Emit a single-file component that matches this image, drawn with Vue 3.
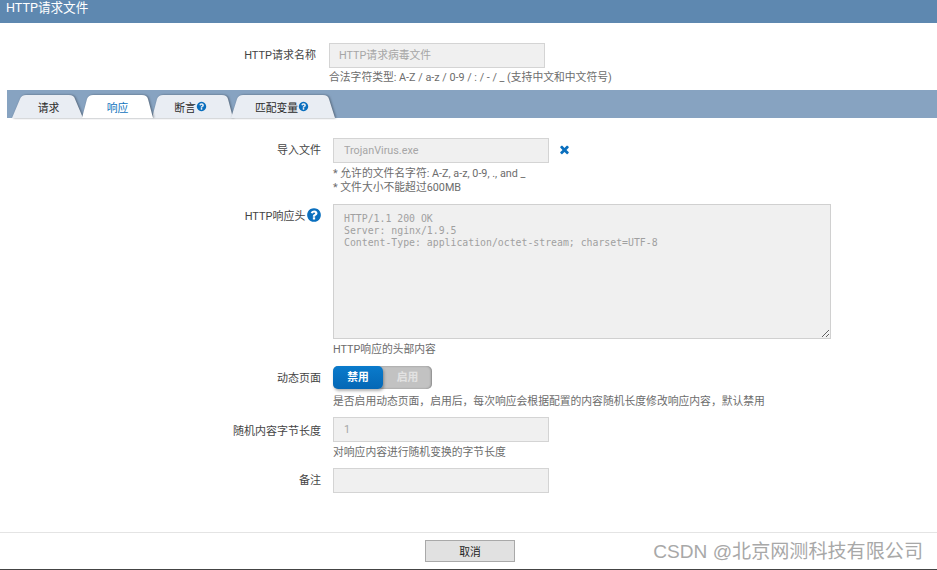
<script setup>
const tabs = [
  { label: '请求', width: 71, inset: 8, shift: 2, help: false },
  { label: '响应', width: 71, inset: 5, shift: 0, help: false, active: true },
  { label: '断言', width: 81, inset: 5, shift: -4, help: true },
  { label: '匹配变量', width: 104, inset: 6, shift: -2, help: true },
]
const tabPath = (t) => {
  const w = t.width
  const i = t.inset
  return `M0 23 L${i} 4 Q${i + 1.5} 0 ${i + 6} 0 L${w - i - 6} 0 Q${w - i - 1} 0 ${w - i} 4 L${w} 23 Z`
}
const tabStyle = (t) => ({
  width: t.width + 'px',
  paddingLeft: Math.max(t.shift, 0) + 'px',
  paddingRight: Math.max(-t.shift, 0) + 'px',
})
const headerText = 'HTTP/1.1 200 OK\nServer: nginx/1.9.5\nContent-Type: application/octet-stream; charset=UTF-8'
const helpPath = 'M1024 1376v-192q0-14-9-23t-23-9h-192q-14 0-23 9t-9 23v192q0 14 9 23t23 9h192q14 0 23-9t9-23zm256-672q0-88-55.5-163t-138.5-116-170-41q-243 0-371 213-15 24 8 42l132 100q7 6 19 6 16 0 25-12 53-68 86-92 34-24 86-24 48 0 85.5 26t37.5 59q0 38-20 61t-68 45q-63 28-115.5 86.5t-52.5 125.5v36q0 14 9 23t23 9h192q14 0 23-9t9-23q0-19 21.5-49.5t54.5-49.5q32-18 49-28.5t46-35 44.5-48 28-60.5 12.5-81zm384 192q0 209-103 385.5t-279.5 279.5-385.5 103-385.5-103-279.5-279.5-103-385.5 103-385.5 279.5-279.5 385.5-103 385.5 103 279.5 279.5 103 385.5z'
</script>

<template>
  <div class="page">
    <header class="title">HTTP请求文件</header>

    <section class="name-row">
      <label class="name-label">HTTP请求名称</label>
      <div class="control">
        <input class="field name-field" readonly value="HTTP请求病毒文件" />
        <div class="hint">合法字符类型: A-Z / a-z / 0-9 / : / - / _ (支持中文和中文符号)</div>
      </div>
    </section>

    <nav class="tabbar">
      <div v-for="t in tabs" :key="t.label" class="tab" :class="{ active: t.active }" :style="tabStyle(t)">
        <svg class="tab-bg" :width="t.width" height="23" :viewBox="`0 0 ${t.width} 23`">
          <path :d="tabPath(t)" />
        </svg>
        <span class="tab-label">{{ t.label }}</span>
        <svg v-if="t.help" class="help tab-help" viewBox="0 0 1792 1792"><path :d="helpPath" /></svg>
      </div>
    </nav>

    <main class="form">
      <div class="row">
        <label class="label">导入文件</label>
        <div class="control">
          <div class="file-line">
            <input class="field" readonly value="TrojanVirus.exe" />
            <svg class="remove" viewBox="0 0 1792 1792"><path d="M1490 1322q0 40-28 68l-136 136q-28 28-68 28t-68-28l-294-294-294 294q-28 28-68 28t-68-28l-136-136q-28-28-28-68t28-68l294-294-294-294q-28-28-28-68t28-68l136-136q28-28 68-28t68 28l294 294 294-294q28-28 68-28t68 28l136 136q28 28 28 68t-28 68l-294 294 294 294q28 28 28 68z" /></svg>
          </div>
          <div class="hint">* 允许的文件名字符: A-Z, a-z, 0-9, ., and _</div>
          <div class="hint tight">* 文件大小不能超过600MB</div>
        </div>
      </div>

      <div class="row">
        <label class="label">HTTP响应头<svg class="help label-help" viewBox="0 0 1792 1792"><path :d="helpPath" /></svg></label>
        <div class="control">
          <textarea class="area" readonly :value="headerText"></textarea>
          <div class="hint">HTTP响应的头部内容</div>
        </div>
      </div>

      <div class="row">
        <label class="label">动态页面</label>
        <div class="control">
          <div class="toggle">
            <span class="opt on">禁用</span>
            <span class="opt off">启用</span>
          </div>
          <div class="hint toggle-hint">是否启用动态页面，启用后，每次响应会根据配置的内容随机长度修改响应内容，默认禁用</div>
        </div>
      </div>

      <div class="row random-row">
        <label class="label">随机内容字节长度</label>
        <div class="control">
          <input class="field" readonly value="1" />
          <div class="hint">对响应内容进行随机变换的字节长度</div>
        </div>
      </div>

      <div class="row">
        <label class="label">备注</label>
        <div class="control">
          <input class="field" readonly value="" />
        </div>
      </div>
    </main>

    <footer class="footer">
      <button class="cancel" type="button">取消</button>
      <div class="watermark">CSDN @北京网测科技有限公司</div>
    </footer>
  </div>
</template>

<style>
html, body { margin: 0; background: #fff; overflow: hidden; }
</style>

<style scoped>
.page {
  position: relative;
  height: 570px;
  display: flex;
  flex-direction: column;
  box-sizing: border-box;
  font-family: Roboto, "Noto Sans CJK SC", sans-serif;
  font-size: 10.8px;
  color: #444;
  background: #fff;
}
.title {
  height: 23px;
  line-height: 16px;
  padding-left: 6px;
  background: #5e88b0;
  color: #fff;
  font-size: 12.6px;
}
.name-row {
  display: flex;
  gap: 13px;
  padding-top: 20px;
  height: 47px;
}
.name-label {
  width: 316px;
  text-align: right;
  line-height: 26px;
  font-size: 11px;
  color: #444;
}
.control { display: flex; flex-direction: column; align-items: flex-start; }
.field {
  box-sizing: border-box;
  width: 216px;
  height: 25px;
  padding: 0 10px;
  border: 1px solid #d4d4d4;
  background: #f0f0f0;
  color: #a6a6a6;
  font: inherit;
  outline: none;
}
.name-field { padding: 0 9px 3px; }
.hint {
  margin-top: 4px;
  line-height: 14px;
  color: #6c6c6c;
  white-space: nowrap;
}
.hint.tight { margin-top: 0; }
.hint.toggle-hint { margin-top: 6px; line-height: 13px; }
.random-row .hint { line-height: 13px; }
.name-row .hint { margin-top: 3px; }
.tabbar {
  display: flex;
  height: 28px;
  margin-left: 7px;
  padding: 5px 0 0 5px;
  box-sizing: border-box;
  background: #87a3c1;
}
.tab {
  position: relative;
  box-sizing: border-box;
  height: 23px;
  margin-right: -1px;
  display: flex;
  align-items: center;
  justify-content: center;
  color: #2a2a2a;
}
.tab:nth-child(3) { margin-right: -2px; }
.tab-bg {
  position: absolute;
  left: 0;
  top: 0;
  overflow: visible;
  filter: drop-shadow(1.5px 0 1px rgba(40, 50, 60, 0.55));
}
.tab-bg path { fill: #e9edf3; }
.tab.active { z-index: 1; color: #1173bd; }
.tab.active .tab-bg path { fill: #fff; }
.tab-label, .tab-help { position: relative; }
.help { fill: #0a6fbe; display: block; }
.tab-help { width: 11px; height: 11px; }
.form {
  display: flex;
  flex-direction: column;
  gap: 9px;
  padding-top: 20px;
}
.row {
  display: flex;
  gap: 12px;
}
.label {
  width: 321px;
  flex: none;
  display: flex;
  justify-content: flex-end;
  align-items: center;
  height: 22px;
  font-size: 11px;
  color: #444;
}
.random-row .label { height: 25px; }
.label-help { width: 16px; height: 16px; margin-right: -0.5px; }
.file-line { display: flex; align-items: center; }
.remove {
  width: 13px;
  height: 13px;
  margin-left: 9px;
  margin-top: -3px;
  fill: #0a6fbe;
}
.area {
  display: block;
  box-sizing: border-box;
  width: 498px;
  height: 135px;
  padding: 8px 10px;
  border: 1px solid #d0d0d0;
  background: #f0f0f0;
  color: #a0a0a0;
  font-family: "DejaVu Sans Mono", monospace;
  font-size: 9.83px;
  line-height: 12px;
  outline: none;
}
.toggle {
  display: flex;
  width: 99px;
  height: 23px;
  border-radius: 5px;
  background: #c2c2c2;
  font-weight: 700;
  box-shadow: inset -1px 0 2px rgba(0, 0, 0, 0.3);
}
.opt {
  display: flex;
  align-items: center;
  justify-content: center;
  padding-bottom: 3px;
  box-sizing: border-box;
  border-radius: 5px;
}
.on {
  width: 50px;
  color: #fff;
  background: linear-gradient(#0a7bcc, #0467b5);
  box-shadow: 1px 2px 3px rgba(0, 0, 0, 0.3);
}
.off { flex: 1; color: #e2e2e2; }
.footer {
  margin-top: auto;
  height: 38px;
  box-sizing: border-box;
  padding-top: 7px;
  display: flex;
  justify-content: center;
  border-top: 1px solid #e4e4e4;
  border-bottom: 1px solid #444;
}
.cancel {
  box-sizing: border-box;
  width: 90px;
  height: 22px;
  padding: 0;
  margin-left: 3px;
  border: 1px solid #a9a9a9;
  background: #e1e1e1;
  color: #222;
  font: inherit;
}
.watermark {
  position: absolute;
  right: 14px;
  bottom: 6px;
  font-family: "Liberation Sans", "Noto Sans CJK SC", sans-serif;
  font-size: 19.1px;
  line-height: 24px;
  color: #a8a8a8;
  white-space: nowrap;
}
</style>
